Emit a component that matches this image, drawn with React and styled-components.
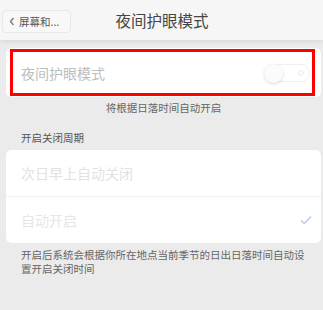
import React from "react";
import styled, { createGlobalStyle } from "styled-components";

const Global = createGlobalStyle`
  html, body { margin: 0; padding: 0; }
  body {
    font-family: "Noto Sans CJK SC", "Noto Sans", sans-serif;
    background: #ebebeb;
  }
`;

const Screen = styled.div`
  width: 323px;
  height: 310px;
  overflow: hidden;
  background: #ebebeb;
  display: flex;
  flex-direction: column;
`;

const Header = styled.header`
  position: relative;
  z-index: 1;
  height: 40px;
  flex: none;
  background: #f6f6f6;
  box-shadow: 0 1px 5px rgba(0, 0, 0, 0.1);
  display: flex;
  align-items: center;
  justify-content: center;
`;

const BackButton = styled.div`
  position: absolute;
  left: 2px;
  top: 10px;
  width: 69px;
  height: 23px;
  box-sizing: border-box;
  border: 1px solid #e8e8e8;
  border-radius: 4px;
  background: #f8f8f8;
  display: flex;
  align-items: center;
  padding-left: 6px;
  gap: 4px;
  font-size: 10.5px;
  color: #555;
`;

const Title = styled.h1`
  margin: 0;
  margin-left: 1px;
  font-size: 15.5px;
  font-weight: 400;
  color: #444;
`;

const Content = styled.main`
  display: flex;
  flex-direction: column;
  padding: 8px 2px 0 6px;
`;

const Card = styled.section`
  position: relative;
  background: #fff;
  border-radius: 5px;
  box-shadow: 0 0 1px rgba(0, 0, 0, 0.06);
  display: flex;
  flex-direction: column;
`;

const Row = styled.div`
  height: ${(p) => p.$h}px;
  display: flex;
  align-items: center;
  justify-content: space-between;
  padding: 0 9px 0 15px;
  font-size: 14px;
  color: ${(p) => p.$color};
  border-top: ${(p) => (p.$divider ? "1px solid #f0f0f0" : "none")};
  box-sizing: border-box;
`;

const Highlight = styled.div`
  position: absolute;
  left: 4px;
  top: 1px;
  width: 305px;
  height: 47px;
  box-sizing: border-box;
  border: 3px solid #ff0000;
  pointer-events: none;
`;

const Toggle = styled.div`
  position: relative;
  width: 46px;
  height: 18px;
  margin-right: 2px;
  box-sizing: border-box;
  border: 1px solid #efefef;
  border-radius: 9px;
  background: #fff;
`;

const Knob = styled.div`
  position: absolute;
  left: -1px;
  top: -1px;
  width: 19px;
  height: 19px;
  border-radius: 50%;
  background: #fbfbfb;
  box-shadow: 0 1px 3px rgba(0, 0, 0, 0.15);
`;

const Dot = styled.div`
  position: absolute;
  right: 5px;
  top: 5px;
  width: 6px;
  height: 6px;
  border-radius: 50%;
  border: 1px solid #eaeaea;
  box-sizing: border-box;
`;

const Caption = styled.p`
  margin: 4px 0 0;
  height: 14px;
  line-height: 14px;
  text-align: center;
  font-size: 10.5px;
  color: #666;
`;

const SectionLabel = styled.p`
  margin: 16px 0 0 15px;
  height: 14px;
  line-height: 14px;
  font-size: 10.5px;
  color: #555;
`;

const Note = styled.p`
  margin: 5px 10px 0 15px;
  line-height: 14px;
  font-size: 10.5px;
  color: #666;
`;

export default function App() {
  return (
    <>
      <Global />
      <Screen>
        <Header>
          <BackButton>
            <svg width="6" height="9" viewBox="0 0 6 9">
              <path d="M4.5 1 L1.5 4.5 L4.5 8" fill="none" stroke="#777" strokeWidth="1.3" />
            </svg>
            <span>屏幕和...</span>
          </BackButton>
          <Title>夜间护眼模式</Title>
        </Header>
        <Content>
          <Card>
            <Row $h={49} $color="#bdbdbd">
              <span>夜间护眼模式</span>
              <Toggle>
                <Knob />
                <Dot />
              </Toggle>
            </Row>
            <Highlight />
          </Card>
          <Caption>将根据日落时间自动开启</Caption>
          <SectionLabel>开启关闭周期</SectionLabel>
          <Card style={{ marginTop: 5 }}>
            <Row $h={46} $color="#e2e2e2">
              <span>次日早上自动关闭</span>
            </Row>
            <Row $h={47} $color="#e6e6e6" $divider>
              <span>自动开启</span>
              <svg width="12" height="10" viewBox="0 0 12 10">
                <path d="M1 5.5 L4.3 8.5 L11 1.5" fill="none" stroke="#b9c9f2" strokeWidth="1.6" />
              </svg>
            </Row>
          </Card>
          <Note>开启后系统会根据你所在地点当前季节的日出日落时间自动设置开启关闭时间</Note>
        </Content>
      </Screen>
    </>
  );
}
